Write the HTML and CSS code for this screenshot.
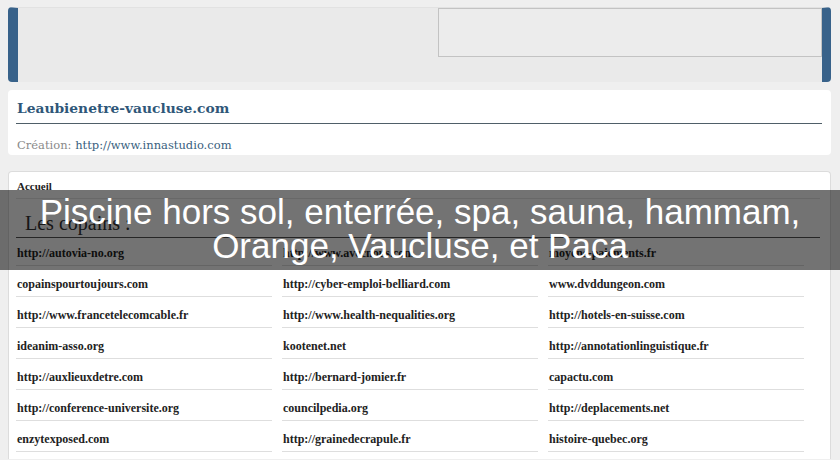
FILE: index.html
```html
<!DOCTYPE html>
<html lang="fr">
<head>
<meta charset="utf-8">
<title>Leaubienetre-vaucluse.com</title>
<link rel="stylesheet" href="styles.css">
</head>
<body>
<div class="page">
  <div class="header">
    <div class="search"></div>
  </div>
  <div class="titlebox">
    <h1 class="site-title">Leaubienetre-vaucluse.com</h1>
    <p class="credit"><span class="credit-label">Création:</span> <span class="credit-link">http://www.innastudio.com</span></p>
  </div>
  <div class="content">
    <div class="crumb">Accueil</div>
    <h2 class="section-title">Les copains :</h2>
    <div class="links">
      <div class="cell">http://autovia-no.org</div>
      <div class="cell">http://www.avecnous.com</div>
      <div class="cell">moyens-paiements.fr</div>
      <div class="cell">copainspourtoujours.com</div>
      <div class="cell">http://cyber-emploi-belliard.com</div>
      <div class="cell">www.dvddungeon.com</div>
      <div class="cell">http://www.francetelecomcable.fr</div>
      <div class="cell">http://www.health-nequalities.org</div>
      <div class="cell">http://hotels-en-suisse.com</div>
      <div class="cell">ideanim-asso.org</div>
      <div class="cell">kootenet.net</div>
      <div class="cell">http://annotationlinguistique.fr</div>
      <div class="cell">http://auxlieuxdetre.com</div>
      <div class="cell">http://bernard-jomier.fr</div>
      <div class="cell">capactu.com</div>
      <div class="cell">http://conference-universite.org</div>
      <div class="cell">councilpedia.org</div>
      <div class="cell">http://deplacements.net</div>
      <div class="cell">enzytexposed.com</div>
      <div class="cell">http://grainedecrapule.fr</div>
      <div class="cell">histoire-quebec.org</div>
    </div>
  </div>
</div>
<div class="banner">Piscine hors sol, enterrée, spa, sauna, hammam,<br>Orange, Vaucluse, et Paca</div>
</body>
</html>
```

FILE: styles.css
```css
html, body {
  margin: 0;
  padding: 0;
  height: 100%;
  overflow: hidden;
}
body {
  background: #efefef;
  font-family: "Liberation Serif", "DejaVu Serif", serif;
  color: #222;
}
.page {
  padding: 7px 9px 0 8px;
}
.header {
  height: 75px;
  box-sizing: border-box;
  background: #eaeaea;
  border-top: 1px solid #e2e2e2;
  border-left: 10px solid #38628a;
  border-right: 9px solid #38628a;
  border-radius: 4px;
  display: flex;
  justify-content: flex-end;
  align-items: flex-start;
}
.search {
  width: 384px;
  height: 49px;
  box-sizing: border-box;
  border: 1px solid #c3c3c3;
  background: #ececec;
}
.titlebox {
  margin-top: 8px;
  height: 65px;
  background: #fff;
  border-radius: 4px;
  padding: 0 9px 0 8px;
}
.site-title {
  margin: 0;
  padding: 9px 0 6px 1px;
  font-family: "DejaVu Serif", serif;
  font-weight: bold;
  font-size: 13.8px;
  line-height: 18px;
  color: #2f5779;
  border-bottom: 1px solid #4f5f68;
}
.credit {
  margin: 14px 0 0 1px;
  font-family: "DejaVu Serif", serif;
  font-size: 11.5px;
  line-height: 14px;
}
.credit-label {
  color: #8a8a8a;
}
.credit-link {
  color: #3a5f80;
}
.content {
  margin-top: 16px;
  height: 287px;
  overflow: hidden;
  background: #fff;
  border: 1px solid #dcdcdc;
  border-bottom: 0;
  border-radius: 4px 4px 0 0;
  padding: 0 10px 0 7px;
}
.crumb {
  padding: 8px 0 5px 1px;
  font-size: 11px;
  line-height: 13px;
  font-weight: bold;
  color: #222;
  border-bottom: 1px solid #e6e6e6;
}
.section-title {
  margin: 0;
  padding: 12px 0 0 9px;
  height: 26px;
  font-size: 20px;
  line-height: 24px;
  font-weight: normal;
  color: #333;
  border-bottom: 1px solid #555;
}
.links {
  display: grid;
  grid-template-columns: repeat(3, 256px);
  column-gap: 10px;
  margin-top: -3px;
}
.cell {
  padding: 12px 0 5px 1px;
  font-size: 12px;
  line-height: 13px;
  font-weight: bold;
  color: #222;
  border-bottom: 1px solid #dedede;
}
.banner {
  position: absolute;
  top: 190px;
  left: 0;
  width: 840px;
  height: 80px;
  box-sizing: border-box;
  padding-top: 5px;
  background: rgba(0, 0, 0, 0.55);
  color: #fff;
  text-align: center;
  font-family: "Liberation Sans", Arial, sans-serif;
  font-size: 35px;
  line-height: 34px;
}
```
